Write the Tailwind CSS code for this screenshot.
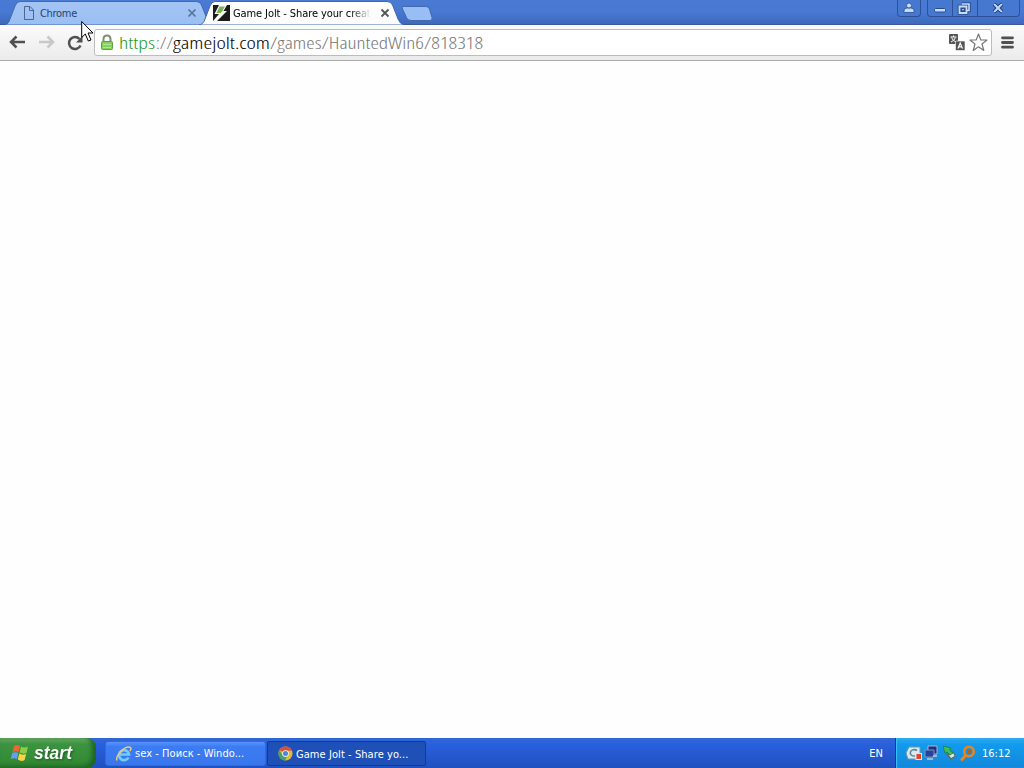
<!DOCTYPE html>
<html lang="en">
<head>
    <meta charset="UTF-8">
    <meta name="viewport" content="width=device-width, initial-scale=1.0">
    <title>Game Jolt - Share your creations</title>
    <script src="https://cdn.jsdelivr.net/npm/@tailwindcss/browser@4"></script>
</head>
<body class="w-[1024px] h-[768px] overflow-hidden flex flex-col bg-white relative font-['DejaVu_Sans_Condensed','DejaVu_Sans',sans-serif] [font-stretch:condensed]">

    <!-- Tab strip -->
    <header class="h-[25px] shrink-0 flex relative bg-linear-to-b from-[#4a7ad2] via-[#4779d2] to-[#3d69bd] border-b border-[#3c5b95]">
        <svg class="absolute left-0 top-0" width="440" height="25" viewBox="0 0 440 25">
            <defs>
                <linearGradient id="tab" x1="0" y1="0" x2="0" y2="1">
                    <stop offset="0" stop-color="#a3c4f5"/>
                    <stop offset="1" stop-color="#9bbff2"/>
                </linearGradient>
            </defs>
            <path d="M5 25C8 24 9 22 10 19L15 6Q16.500 1.500 20 1.500H196Q200 1.500 201.500 5L207 19Q208 24 211 25Z" fill="url(#tab)" stroke="#4169ab"/>
            <path d="M199 25C203 24 204 22 205 19L210 6Q211.500 1.500 215 1.500H387Q391 1.500 392.500 5L398 19Q400 24 404 25Z" fill="#fdfdfd" stroke="#4169ab"/>
            <path d="M403 6.500H426Q428.500 6.500 429.500 9L432 17.500Q433 20.500 430 20.500H411Q407.500 20.500 406.500 17.500L402.500 9Q401.500 6.500 403 6.500Z" fill="#98bef5" stroke="#4169ab"/>
        </svg>

        <div class="relative w-[203px] h-[25px] pl-[23px] pr-[6px] flex items-center">
            <svg width="12" height="14" viewBox="0 0 12 14" fill="none" stroke="#4c678f"><path d="M1.500 .5H7L10.500 4V13.500H1.500ZM6.500 .5V4.500H10.500"/></svg>
            <span class="ml-[5px] pt-[3px] text-[11px] tracking-[-0.3px] text-[#2b4268]">Chrome</span>
            <svg class="ml-auto" width="10" height="10" viewBox="0 0 10 10" stroke="#577097" stroke-width="1.600"><path d="M1.500 1.500L8.500 8.500M8.500 1.500L1.500 8.500"/></svg>
        </div>
        <div class="relative w-[200px] h-[25px] pl-[10px] flex items-center">
            <svg class="mt-[1px]" width="17" height="16" viewBox="0 0 17 16">
                <rect width="17" height="16" fill="#1b1b1b"/>
                <path d="M6 0H14L10.500 6H14L4 16H0L6 9H1.500Z" fill="#f8fcf2"/>
                <path d="M6.500 1.500H12L9.500 5.500L7 8H3.500Z" fill="#7fae72"/>
                <path d="M6 5H10L7.500 8H4Z" fill="#75b83a"/>
            </svg>
            <span class="ml-[3px] pt-[3px] w-[138px] overflow-hidden whitespace-nowrap text-[11px] tracking-[-0.1px] text-black mask-r-from-85% mask-r-to-100%">Game Jolt - Share your creat</span>
            <svg class="ml-[9px]" width="10" height="10" viewBox="0 0 10 10" stroke="#555" stroke-width="1.800"><path d="M1.500 1.500L8.500 8.500M8.500 1.500L1.500 8.500"/></svg>
        </div>

        <!-- Window buttons -->
        <div class="ml-auto mr-[4px] flex h-[17px]">
            <div class="w-[24px] mr-[6px] border border-t-0 border-[#2d5196] rounded-b-[4px] bg-[#4778d0] flex justify-center">
                <svg width="12" height="14" viewBox="0 0 12 14" fill="#c6dcfb" stroke="#294d8e" stroke-width=".8"><path d="M1 12.500V10.500Q1 8 4 8H8Q11 8 11 10.500V12.500Z"/><circle cx="6" cy="5.500" r="2.500"/></svg>
            </div>
            <div class="w-[93px] border border-t-0 border-[#2d5196] rounded-b-[4px] bg-[#4778d0] flex">
                <div class="w-[25px] border-r border-[#2d5196] flex justify-center"><svg width="14" height="16" viewBox="0 0 14 16"><rect x="1.500" y="8.500" width="11" height="3.500" rx="1" fill="#c6dcfb" stroke="#294d8e"/></svg></div>
                <div class="w-[25px] border-r border-[#2d5196] flex justify-center"><svg class="ml-[-2px]" width="15" height="16" viewBox="0 0 15 16" fill="none"><path d="M5 4H12V10.500H9M2.500 6.500H9.500V13H2.500Z" stroke="#294d8e" stroke-width="3.600"/><path d="M5 4H12V10.500H9" stroke="#c6dcfb" stroke-width="1.600"/><path d="M2.500 6.500H9.500V13H2.500Z" fill="#294d8e" stroke="#c6dcfb" stroke-width="1.800"/><path d="M5 9.700H7" stroke="#c6dcfb"/></svg></div>
                <div class="flex-1 flex justify-center"><svg class="ml-[-2px]" width="14" height="16" viewBox="0 0 14 16" fill="none"><path d="M3 4L11 12M11 4L3 12" stroke="#294d8e" stroke-width="4"/><path d="M3 4.500H4.500L11 11.500H9.500ZM11 4.500H9.500L3 11.500H4.500Z" fill="#c6dcfb" stroke="#c6dcfb"/></svg></div>
            </div>
        </div>
    </header>

    <!-- Toolbar -->
    <div class="h-[36px] shrink-0 flex items-center bg-linear-to-b from-[#fbfbfb] to-[#ebebeb] border-b border-[#aaa]">
        <svg class="ml-[8px] mt-[-1px]" width="18" height="16" viewBox="0 0 18 16" fill="none" stroke="#505050" stroke-width="2.500"><path d="M17 8H3M8.500 2.500L3 8L8.500 13.500"/></svg>
        <svg class="ml-[12px] mt-[-1px]" width="18" height="16" viewBox="0 0 18 16" fill="none" stroke="#c8c8c8" stroke-width="2.500"><path d="M1 8H15M9.500 2.500L15 8L9.500 13.500"/></svg>
        <svg class="ml-[11px]" width="17" height="16" viewBox="0 0 17 16"><path d="M13.500 10.500A6 6 0 1 1 12.500 4" fill="none" stroke="#505050" stroke-width="2.500"/><path d="M15.500 1V7.500H9Z" fill="#505050"/></svg>
        <div class="ml-[10px] w-[898px] h-[27px] mt-[-1px] bg-white border border-[#bcbcbc] rounded-[3px] flex items-center">
            <svg class="ml-[5px] mt-[2px]" width="14" height="18" viewBox="0 0 14 18"><path d="M3.500 8V5Q3.500 1.500 7 1.500T10.500 5V8" fill="none" stroke="#7d8f75" stroke-width="2"/><rect x="1.500" y="7.500" width="11" height="8" rx="1" fill="#83d05c" stroke="#5e9f48"/><path d="M3 10.500H11M3 13.500H11" stroke="#b0e596"/></svg>
            <svg class="ml-[5px] overflow-visible" width="366" height="20" viewBox="0 0 366 20" font-family="Open Sans, sans-serif" font-size="16" font-weight="300">
                <text x="0" y="17" textLength="36" lengthAdjust="spacingAndGlyphs" fill="#229a22">https</text>
                <text x="37" y="17" textLength="17" lengthAdjust="spacingAndGlyphs" fill="#777">://</text>
                <text x="54" y="17" textLength="97" lengthAdjust="spacingAndGlyphs" fill="#000">gamejolt.com</text>
                <text x="151" y="17" textLength="213" lengthAdjust="spacingAndGlyphs" fill="#777">/games/HauntedWin6/818318</text>
            </svg>
            <svg class="ml-auto" width="17" height="17" viewBox="0 0 17 17"><rect x="1" width="9" height="10" rx="1" fill="#555"/><path d="M2.500 3H8.500M5.500 1.500V3M3.500 3.500Q5 7 8 8M7.500 3.500Q6 7 3 8" stroke="#fff" fill="none"/><rect x="7.500" y="7" width="9.500" height="9.500" rx="1" fill="#555" stroke="#fff" stroke-width=".6"/><path d="M10 14.500L12.200 9L14.500 14.500M10.800 12.800H13.600" stroke="#fff" stroke-width="1.200" fill="none"/></svg>
            <svg class="ml-[4px] mr-[3px]" width="19" height="19" viewBox="0 0 19 19" fill="#fff" stroke="#777" stroke-width="1.200" stroke-linejoin="round"><path d="M9.500 1L11.800 7H18L13 11L14.800 17.500L9.500 13.800L4.200 17.500L6 11L1 7H7.200Z"/></svg>
        </div>
        <svg class="ml-[8px]" width="15" height="13" viewBox="0 0 15 13" stroke="#505050" stroke-width="2.800" stroke-linecap="round"><path d="M2.500 1.800H12.500M2.500 6.500H12.500M2.500 11.200H12.500"/></svg>
    </div>

    <!-- Page -->
    <main class="flex-1 bg-[#fefefe]"></main>

    <!-- Taskbar -->
    <footer class="h-[30px] shrink-0 flex text-white text-[11px] bg-linear-to-b from-[#3168d5] from-0% via-[#2a60dd] via-20% to-[#2050c0]">
        <div class="w-[96px] flex items-center pl-[10px] rounded-r-[9px] bg-linear-to-b from-[#66ab64] from-0% via-[#3c9440] via-20% to-[#2f8832] shadow-[inset_-4px_-2px_5px_#1d6423]">
            <svg width="20" height="20" viewBox="0 0 20 20"><path d="M4 3Q7 1 10 3L8.500 9Q6 7.500 2.500 9Z" fill="#ee6631"/><path d="M11 3.500Q14 5.500 18 3.500L16.500 10Q13 11.500 9.500 9.500Z" fill="#8dcc46"/><path d="M2.200 10Q5 8.500 8.300 10L6.800 16Q4 14.500 .7 16Z" fill="#6c9bf4"/><path d="M9.300 10.500Q12 12.500 16.200 11L14.600 17Q11.500 19 7.800 16.500Z" fill="#fad443"/></svg>
            <svg class="ml-[4px] overflow-visible" width="40" height="22" viewBox="0 0 40 22"><text x="0" y="17" textLength="38" lengthAdjust="spacingAndGlyphs" font-family="Liberation Sans, sans-serif" font-size="18" font-weight="700" font-style="italic" fill="#fff" class="drop-shadow-[1px_1px_1px_#1c5a20]">start</text></svg>
        </div>
        <div class="ml-[9px] mt-[3px] mb-[2px] w-[161px] pl-[10px] flex items-center rounded-[3px] border border-[#3568d8] bg-linear-to-b from-[#5a93fa] from-0% via-[#3c7cf3] via-20% to-[#3876ec]">
            <svg width="16" height="16" viewBox="0 0 16 16" fill="none"><path d="M12.500 11.500A5 5 0 1 1 13 8.500H4" stroke="#72cdf7" stroke-width="2.700"/><path d="M1 14.500C-1 10 9 -1 14.500 1.500C15.500 2.200 15 3.500 14 5" stroke="#eac87c" stroke-width="1.500"/></svg>
            <span class="ml-[3px] pt-[1px] whitespace-nowrap tracking-[0.05px]">sex - Поиск - Windo...</span>
        </div>
        <div class="ml-[1px] mt-[3px] mb-[2px] w-[159px] pl-[10px] flex items-center rounded-[2px] border border-[#173b8c] bg-[#1e50b8]">
            <svg width="15" height="15" viewBox="0 0 16 16"><circle cx="8" cy="8" r="7.500" fill="#e1ba36"/><path d="M8 8L1.500 4.200A7.500 7.500 0 0 1 14.900 5H8Z" fill="#dc4d3c"/><path d="M1.500 4.200A7.500 7.500 0 0 0 7.500 15.500L10.500 9.500L5 10Z" fill="#49a064"/><circle cx="8" cy="8" r="3.600" fill="#eef2f4"/><circle cx="8" cy="8" r="2.700" fill="#4887dd"/></svg>
            <span class="ml-[3px] pt-[3px] whitespace-nowrap tracking-[0.07px]">Game Jolt - Share yo...</span>
        </div>
        <span class="ml-auto mr-[12px] pt-[2px] self-center">EN</span>
        <div class="w-[129px] flex items-center pl-[9px] border-l border-[#123e8e] bg-linear-to-b from-[#2daaf0] from-0% via-[#129bed] via-20% to-[#1287dc] shadow-[inset_1px_0_1px_#40c3f8]">
            <svg class="ml-[1px]" width="17" height="16" viewBox="0 0 17 16"><path d="M3 2H14V8L16 14H2L0 8Z" fill="#d9e9ee" stroke="#7295a8"/><path d="M11 5.500A4 3.200 0 1 0 9 11" fill="none" stroke="#5c8799" stroke-width="1.600"/><rect x="10" y="8.500" width="5.500" height="6" fill="#d74b2c" stroke="#f6ddd2"/></svg>
            <svg width="16" height="16" viewBox="0 0 16 16"><path d="M5 1H14V9H5Z" fill="#1c3182" stroke="#a7b6d4"/><path d="M2 5H11V12H2Z" fill="#26439c" stroke="#8292bb"/><path d="M4 14H10M10 11H14" stroke="#c2cad6" stroke-width="1.500"/></svg>
            <svg class="ml-[4px]" width="15" height="16" viewBox="0 0 15 16"><path d="M3 9L10 6L13 11L8 15Z" fill="#59706f"/><path d="M6 10L10 8L11.500 11L8 13Z" fill="#dfe8e2"/><path d="M0 1L8 3L6.500 5L10 8L7 10L4 7L2 8Z" fill="#42be58" stroke="#137d2e" stroke-width=".7"/></svg>
            <svg class="ml-[1px]" width="17" height="17" viewBox="0 0 17 17" fill="none"><circle cx="10" cy="6.500" r="4.800" stroke="#ee8416" stroke-width="2.600"/><path d="M7 10L2 15.500" stroke="#ee8416" stroke-width="3"/><circle cx="10" cy="6.500" r="2" fill="#c05a12"/></svg>
            <span class="ml-[6px] pt-[2px]">16:12</span>
        </div>
    </footer>

    <!-- Mouse pointer -->
    <svg class="absolute left-[81px] top-[20px]" width="14" height="23" viewBox="0 0 14 23"><path d="M.7 1.500V17.500L4.300 14L7.300 21L10 20L7 13H12Z" fill="#fff" stroke="#000"/></svg>
</body>
</html>
